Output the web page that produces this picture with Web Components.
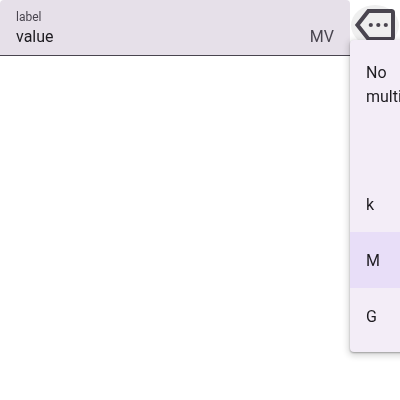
<!DOCTYPE html>
<html lang="en">
<head>
<meta charset="utf-8">
<title>Unit field</title>
<style>
html, body { margin: 0; height: 100%; overflow: hidden; background: #fff; font-family: Roboto, sans-serif; }
</style>
</head>
<body>
<unit-field></unit-field>
<script>
customElements.define('text-field', class extends HTMLElement {
  constructor() {
    super();
    this.attachShadow({ mode: 'open' }).innerHTML = `
      <style>
        :host { display: flex; box-sizing: border-box; flex: none; width: 350px; height: 56px; padding: 9px 16px 6px;
          background: #e6e0e9; border-bottom: 1px solid #49454f; border-radius: 4px 4px 0 0; justify-content: space-between; will-change: transform; }
        .main { display: flex; flex-direction: column; }
        .label { font-size: 12px; line-height: 16px; color: #49454f; }
        .value { font-size: 16px; line-height: 24px; color: #1d1b20; }
        .unit { align-self: flex-end; font-size: 16px; line-height: 24px; color: #49454f; }
      </style>
      <div class="main"><span class="label"><slot name="label"></slot></span><span class="value"><slot></slot></span></div>
      <span class="unit"><slot name="unit"></slot></span>`;
  }
});
customElements.define('more-button', class extends HTMLElement {
  constructor() {
    super();
    this.attachShadow({ mode: 'open' }).innerHTML = `
      <style>
        :host { display: block; flex: none; margin-top: 4.5px; }
        button { display: block; margin: 0; border: 0; padding: 0.5px 4px; background: #efefef; border-radius: 50%; color: #49454f; }
        svg { display: block; width: 40px; height: 40px; overflow: visible; }
      </style>
      <button aria-label="Choose multiplier"><svg viewBox="355 5 40 40"><path d="M368.4 11H391.3Q393 11 393 12.7V37.3Q393 39 391.3 39H368.4L357.4 25Z" fill="none" stroke="currentColor" stroke-width="4" stroke-linejoin="miter"/><g fill="currentColor"><circle cx="370.8" cy="25" r="2.1"/><circle cx="378.3" cy="25" r="2.1"/><circle cx="385.8" cy="25" r="2.1"/></g></svg></button>`;
  }
});
customElements.define('menu-item', class extends HTMLElement {
  constructor() {
    super();
    this.attachShadow({ mode: 'open' }).innerHTML = `
      <style>
        :host { display: block; box-sizing: border-box; min-height: 56px; padding: 17px 16px 15px; font-size: 16px; line-height: 24px; color: #1d1b20; }
        :host([tall]) { min-height: 128px; padding-top: 13px; }
        :host([selected]) { background: #e8def8; }
      </style><slot></slot>`;
  }
});
customElements.define('drop-menu', class extends HTMLElement {
  constructor() {
    super();
    this.attachShadow({ mode: 'open' }).innerHTML = `
      <style>
        :host { position: absolute; top: 40px; left: 350px; width: 112px; padding: 8px 0; background: #f3edf7; border-radius: 4px;
          box-shadow: 0 1px 2px rgba(0,0,0,.3), 0 2px 6px 2px rgba(0,0,0,.15); will-change: transform; }
      </style><slot></slot>`;
  }
});
customElements.define('unit-field', class extends HTMLElement {
  constructor() {
    super();
    this.attachShadow({ mode: 'open' }).innerHTML = `
      <style>:host { display: flex; position: relative; width: 400px; height: 400px; align-items: flex-start; overflow: hidden; } more-button { margin-left: 1px; }</style>
      <text-field><span slot="label">label</span>value<span slot="unit">MV</span></text-field>
      <more-button></more-button>
      <drop-menu>
        <menu-item tall>No<br>multi</menu-item>
        <menu-item>k</menu-item>
        <menu-item selected>M</menu-item>
        <menu-item>G</menu-item>
      </drop-menu>`;
  }
});
</script>
</body>
</html>
